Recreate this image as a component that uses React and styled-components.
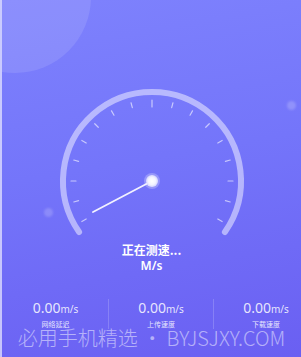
import React from 'react';
import styled, { createGlobalStyle } from 'styled-components';

const Global = createGlobalStyle`
  html, body { margin: 0; padding: 0; background: #6c63f2; }
  * { box-sizing: border-box; }
`;

const Screen = styled.div`
  position: relative;
  width: 301px;
  height: 357px;
  overflow: hidden;
  background: linear-gradient(170deg, #7e82fd 0%, #7475fa 45%, #6a5ff2 100%);
  border-left: 2px solid rgba(230, 230, 255, 0.75);
  font-family: "Noto Sans CJK SC", "Noto Sans", sans-serif;
  color: #fff;
  display: flex;
  flex-direction: column;
  align-items: center;
`;

const Bubble = styled.div`
  position: absolute;
  border-radius: 50%;
  background: rgba(255, 255, 255, ${p => p.$alpha});
  width: ${p => p.$size}px;
  height: ${p => p.$size}px;
  left: ${p => p.$x}px;
  top: ${p => p.$y}px;
  filter: blur(${p => p.$blur || 0}px);
`;

const Gauge = styled.svg`
  display: block;
  margin-top: 88px;
  margin-left: 1px;
`;

const Status = styled.div`
  display: flex;
  flex-direction: column;
  align-items: center;
  margin-top: 2px;
  line-height: 16px;
`;

const StatusTitle = styled.div`
  font-size: 12px;
  font-weight: 700;
`;

const Unit = styled.div`
  font-family: "Noto Sans", sans-serif;
  font-size: 12px;
  font-weight: 600;
`;

const Stats = styled.div`
  display: grid;
  grid-template-columns: repeat(3, 105px);
  align-self: flex-start;
  margin-top: 25px;
  margin-left: 1px;
`;

const Stat = styled.div`
  display: flex;
  flex-direction: column;
  align-items: center;
  border-left: ${p => (p.$first ? 'none' : '1px solid rgba(255,255,255,0.18)')};
  padding-top: 0;
`;

const Value = styled.div`
  font-family: "Noto Sans", sans-serif;
  font-size: 14px;
  line-height: 17px;
  color: rgba(255, 255, 255, 0.85);
  small {
    font-size: 10px;
  }
`;

const Label = styled.div`
  font-size: 7px;
  line-height: 10px;
  color: rgba(255, 255, 255, 0.85);
  margin-top: 1px;
`;

const Watermark = styled.div`
  font-family: "Noto Sans CJK SC", "Noto Sans", sans-serif;
  font-weight: 300;
  font-size: 20px;
  line-height: 24px;
  color: rgba(255, 255, 255, 0.5);
  white-space: nowrap;
  margin-top: -3px;
`;

const CX = 100;
const CY = 93;
const R = 89;

function polar(r, deg) {
  const a = (deg * Math.PI) / 180;
  return [CX + r * Math.cos(a), CY - r * Math.sin(a)];
}

function SpeedGauge() {
  const start = polar(R, 215);
  const end = polar(R, -35);
  const ticks = [];
  for (let i = 0; i <= 16; i++) {
    const deg = 210 - i * 15;
    const [x1, y1] = polar(81, deg);
    const [x2, y2] = polar(i === 8 ? 74 : 76, deg);
    ticks.push(
      <line key={i} x1={x1} y1={y1} x2={x2} y2={y2}
        stroke="rgba(255,255,255,0.6)" strokeWidth="1.2" strokeLinecap="round" />
    );
  }
  return (
    <Gauge width="200" height="152" viewBox="0 0 200 152">
      <defs>
        <radialGradient id="knob">
          <stop offset="0%" stopColor="#ffffff" />
          <stop offset="60%" stopColor="#f4f4ff" />
          <stop offset="100%" stopColor="#d6d6ff" />
        </radialGradient>
      </defs>
      <path
        d={`M ${start[0]} ${start[1]} A ${R} ${R} 0 1 1 ${end[0]} ${end[1]}`}
        fill="none" stroke="rgba(225,225,255,0.62)" strokeWidth="6" strokeLinecap="round" />
      {ticks}
      <line x1={CX} y1={CY} x2="41" y2="124" stroke="rgba(255,255,255,0.9)" strokeWidth="1.8" strokeLinecap="round" />
      <circle cx={CX} cy={CY} r="8" fill="rgba(255,255,255,0.25)" />
      <circle cx={CX} cy={CY} r="6" fill="url(#knob)" />
    </Gauge>
  );
}

const stats = [
  { label: '网络延迟' },
  { label: '上传速度' },
  { label: '下载速度' },
];

export default function App() {
  return (
    <>
      <Global />
      <Screen>
        <Bubble $size={152} $x={-63} $y={-79} $alpha={0.11} />
        <Bubble $size={9} $x={285} $y={101} $alpha={0.2} $blur={1} />
        <Bubble $size={9} $x={42} $y={208} $alpha={0.18} $blur={1} />
        <SpeedGauge />
        <Status>
          <StatusTitle>正在测速...</StatusTitle>
          <Unit>M/s</Unit>
        </Status>
        <Stats>
          {stats.map((s, i) => (
            <Stat key={s.label} $first={i === 0}>
              <Value>0.00<small>m/s</small></Value>
              <Label>{s.label}</Label>
            </Stat>
          ))}
        </Stats>
        <Watermark>必用手机精选 • BYJSJXY.COM</Watermark>
      </Screen>
    </>
  );
}
